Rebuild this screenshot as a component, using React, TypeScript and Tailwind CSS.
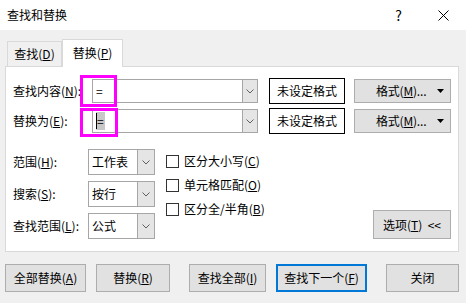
import React from "react";

const Chevron = () => (
  <svg width="8" height="5" viewBox="0 0 8 5" className="block">
    <polyline points="0.5,0.5 4,4 7.5,0.5" fill="none" stroke="#606060" strokeWidth="1" />
  </svg>
);

const Combo = ({ w, text, children }: { w: string; text?: string; children?: React.ReactNode }) => (
  <div className={`flex h-[24px] ${w} border border-[#a6a6a6] bg-white`}>
    <div className="relative flex flex-1 items-center pl-[3px] text-[12px] text-black">
      {text}
      {children}
    </div>
    <div className="flex w-[15px] items-center justify-center border-l border-[#a6a6a6] bg-[#e5e5e5]">
      <Chevron />
    </div>
  </div>
);

const SmallCombo = ({ text }: { text: string }) => (
  <div className="flex h-[26px] w-[67px] border border-[#a6a6a6] bg-white">
    <div className="flex flex-1 items-center whitespace-nowrap pl-[3px] text-[12px] text-black">{text}</div>
    <div className="flex w-[17px] items-center justify-center border-l border-[#a6a6a6] bg-[#e5e5e5]">
      <Chevron />
    </div>
  </div>
);

const FormatRow = () => (
  <>
    <div className="ml-[11px] flex h-[26px] w-[76px] items-center justify-center whitespace-nowrap border border-black bg-white text-[12px] text-black">
      未设定格式
    </div>
    <div className="relative ml-[9px] flex h-[24px] w-[97px] items-center border border-[#adadad] bg-[#e1e1e1] text-[12px] text-black">
      <span className="ml-[21px] whitespace-nowrap tracking-[-0.2px]">
        格式(<u>M</u>)...
      </span>
      <svg width="7" height="4" viewBox="0 0 7 4" className="absolute right-[6px] top-[9px] block">
        <polygon points="0,0 7,0 3.5,4" fill="#000" />
      </svg>
    </div>
  </>
);

const Check = ({ children }: { children: React.ReactNode }) => (
  <div className="flex h-[24px] items-center">
    <div className="h-[13px] w-[13px] border border-[#333333] bg-white" />
    <span className="ml-[5px] whitespace-nowrap text-[12px] text-black">{children}</span>
  </div>
);

const Btn = ({ w, ml, children, primary }: { w: string; ml: string; children: React.ReactNode; primary?: boolean }) => (
  <div
    className={`${ml} ${w} flex h-[28px] items-center justify-center whitespace-nowrap bg-[#e1e1e1] text-[12px] text-black ${
      primary ? "border-2 border-[#0078d7]" : "border border-[#adadad]"
    }`}
  >
    {children}
  </div>
);

export default function App() {
  return (
    <div className="h-[303px] w-[466px] overflow-hidden bg-[#f0f0f0] font-['Microsoft_YaHei','Noto_Sans_CJK_SC',sans-serif] text-black">
      {/* title bar */}
      <div className="flex h-[30px] items-center bg-white">
        <span className="ml-[7px] text-[12px]">查找和替换</span>
        <span className="ml-auto mr-[36px] text-[14px] leading-none">?</span>
        <svg width="11" height="11" viewBox="0 0 11 11" className="mr-[17px] block">
          <path d="M0.5 0.5 L10.5 10.5 M10.5 0.5 L0.5 10.5" stroke="#000" strokeWidth="1" />
        </svg>
      </div>

      {/* tabs */}
      <div className="ml-[7px] mt-[9px] flex h-[27px] items-end">
        <div className="flex h-[25px] w-[55px] items-center justify-center whitespace-nowrap border border-b-0 border-[#d9d9d9] bg-[#f0f0f0] text-[12px]">
          查找(<u>D</u>)
        </div>
        <div className="relative z-10 -mb-px flex h-[28px] w-[61px] items-center justify-center whitespace-nowrap border border-b-0 border-[#d9d9d9] bg-white pb-[2px] text-[12px]">
          替换(<u>P</u>)
        </div>
      </div>

      {/* panel */}
      <div className="relative ml-[5px] h-[186px] w-[454px] border border-[#d9d9d9] bg-white px-[7px] pt-[11px]">
        {/* find row */}
        <div className="flex h-[26px] items-center">
          <div className="w-[79px] whitespace-nowrap text-[12px]">
            查找内容(<u>N</u>):
          </div>
          <Combo w="w-[166px]" text="=" />
          <FormatRow />
        </div>
        {/* replace row */}
        <div className="mt-[4px] flex h-[26px] items-center">
          <div className="w-[79px] whitespace-nowrap text-[12px]">
            替换为(<u>E</u>):
          </div>
          <Combo w="w-[166px]">
            <span className="relative bg-[#c8c8c8] px-[1px]">=</span>
            <span className="absolute left-[3px] top-[3px] h-[16px] w-[1px] bg-black" />
          </Combo>
          <FormatRow />
        </div>

        {/* options */}
        <div className="mt-[15px] flex">
          <div className="flex flex-col gap-[6px]">
            <div className="flex items-center">
              <div className="w-[75px] whitespace-nowrap text-[12px]">
                范围(<u>H</u>):
              </div>
              <SmallCombo text="工作表" />
            </div>
            <div className="flex items-center">
              <div className="w-[75px] whitespace-nowrap text-[12px]">
                搜索(<u>S</u>):
              </div>
              <SmallCombo text="按行" />
            </div>
            <div className="flex items-center">
              <div className="w-[75px] whitespace-nowrap text-[12px]">
                查找范围(<u>L</u>):
              </div>
              <SmallCombo text="公式" />
            </div>
          </div>
          <div className="ml-[11px] flex flex-col">
            <Check>
              区分大小写(<u>C</u>)
            </Check>
            <Check>
              单元格匹配(<u>O</u>)
            </Check>
            <Check>
              区分全/半角(<u>B</u>)
            </Check>
          </div>
          <div className="ml-auto flex h-[29px] w-[78px] items-center justify-center self-end whitespace-nowrap border border-[#adadad] bg-[#e1e1e1] text-[12px]">
            选项(<u>T</u>)&nbsp;&nbsp;&lt;&lt;
          </div>
        </div>

        {/* magenta highlight boxes */}
        <div className="absolute left-[74px] top-[8px] h-[32px] w-[37px] border-[3px] border-[#ff00ff]" />
        <div className="absolute left-[74px] top-[41px] h-[29px] w-[38px] border-[3px] border-[#ff00ff]" />
      </div>

      {/* bottom buttons */}
      <div className="mt-[12px] flex">
        <Btn ml="ml-[5px]" w="w-[81px]">
          全部替换(<u>A</u>)
        </Btn>
        <Btn ml="ml-[10px]" w="w-[74px]">
          替换(<u>R</u>)
        </Btn>
        <Btn ml="ml-[19px]" w="w-[77px]">
          查找全部(<u>I</u>)
        </Btn>
        <Btn ml="ml-[10px]" w="w-[91px]" primary>
          查找下一个(<u>F</u>)
        </Btn>
        <Btn ml="ml-[19px]" w="w-[73px]">
          关闭
        </Btn>
      </div>
    </div>
  );
}
